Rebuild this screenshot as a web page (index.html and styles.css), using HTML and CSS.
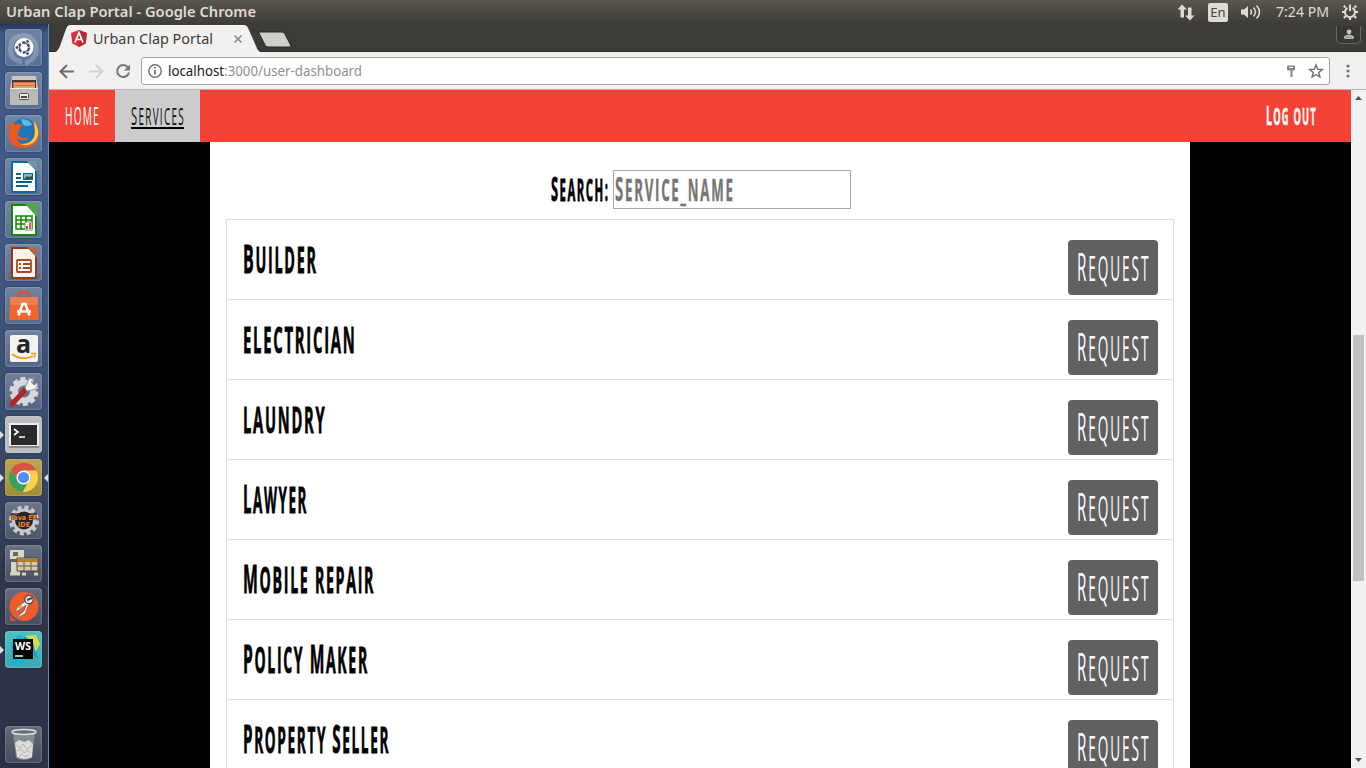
FILE: index.html
```html
<!DOCTYPE html>
<html lang="en">
<head>
<meta charset="utf-8">
<title>Urban Clap Portal</title>
<link rel="stylesheet" href="styles.css">
</head>
<body>
<div class="desktop">
  <header class="panel">
    <svg class="panel-title" width="260" height="24"><text x="6" y="17" textLength="250" lengthAdjust="spacingAndGlyphs">Urban Clap Portal - Google Chrome</text></svg>
    <div class="indicators">
      <svg width="18" height="18" viewBox="0 0 18 18" fill="#dfdbd2"><path d="M5 1.500 10 6.500H7v8H3.500v-8H.5zM13 17.500 8 12.500h3v-8h3.500v8h3z"/></svg>
      <span class="lang">En</span>
      <svg class="sound" width="22" height="18" viewBox="0 0 22 18"><path d="M1 6.500h3L8 3v12l-4-3.500H1z" fill="#dfdbd2"/><path d="M10.500 6.500q2 2.500 0 5M13.500 4.500q4 4.500 0 9M16.500 2.500q6 6.500 0 13" fill="none" stroke="#dfdbd2" stroke-width="1.500"/></svg>
      <svg class="clock" width="54" height="24"><text x="0" y="17" textLength="53" lengthAdjust="spacingAndGlyphs">7:24 PM</text></svg>
      <svg class="gear" width="18" height="18" viewBox="0 0 18 18" fill="none" stroke="#dfdbd2"><path d="M6.500 4.800a5 5 0 1 0 5 0M9 1.500V8" stroke-width="2"/><path d="M4.500 4.500 2.700 2.700M13.500 4.500l1.800-1.800M4 9H1M14 9h3M4.800 13l-2 2M13.200 13l2 2M9 14v3" stroke-width="2.200"/></svg>
    </div>
  </header>

  <div class="workspace">
    <nav class="launcher">
      <div class="tile"><svg viewBox="0 0 37 37"><path d="M8 10Q25 1 31 17 33 30 20 34M8 10Q0 30 17 33" fill="none" stroke="#c3cbe0" stroke-width="5" opacity=".35"/><circle cx="19" cy="18.500" r="9.500" fill="#fff"/><circle cx="19" cy="18.500" r="5" fill="none" stroke="#39496d" stroke-width="2.400" stroke-dasharray="9 1.500"/><g fill="#39496d" stroke="#fff"><circle cx="12" cy="18.500" r="1.900"/><circle cx="22.500" cy="12.400" r="1.900"/><circle cx="22.500" cy="24.600" r="1.900"/></g></svg></div>
      <div class="tile"><svg viewBox="0 0 37 37"><path d="M7 4h24l2 13H5z" fill="#c8c7c4"/><path d="M7 8h24v9H7z" fill="#423b37"/><path d="M8 10h22v7H8z" fill="#de7138"/><path d="M9 12h21M9 15h21" stroke="#f8c890"/><path d="M5 16h28v17H5z" fill="#b9b9b7"/><path d="M5 16.500h28" stroke="#eee"/><rect x="14.500" y="21.500" width="9" height="6" rx="1" fill="#eee" stroke="#555"/><path d="M16 25h6" stroke="#444" stroke-width="2"/></svg></div>
      <div class="tile"><svg viewBox="0 0 37 37"><circle cx="19" cy="18" r="14.500" fill="#2475b6"/><path d="M16 4q9 0 11 6-5 2-9 0" fill="#54bce5"/><path d="M4 10q3-1 3-4l3 4q4-2 8 0-4 3-4 6l-2 3q4 6 12 3-5 7-12 1 3 9 12 5 8-5 5-17l-2-5q7 6 7 14-2 13-16 13Q3 33 4 17z" fill="#e95a20"/><path d="M29 6q9 13-1 22-7 4-12 1 14 0 14-13z" fill="#ffca45"/></svg></div>
      <div class="tile"><svg viewBox="0 0 37 37"><path d="M7 4h17l7 7v23H7z" fill="#fff" stroke="#15699a" stroke-width="2"/><path d="M22 3h10v11z" fill="#6898ae"/><g stroke="#155c86" stroke-width="2"><path d="M11 16h5M11 20h5M11 24h16M11 28h12"/></g><rect x="18.500" y="15.500" width="9" height="6" fill="#79b9de" stroke="#155c86"/><path d="m19 21 3-3 2 1 3-1v3z" fill="#3e4d42"/></svg></div>
      <div class="tile"><svg viewBox="0 0 37 37"><path d="M7 4h17l7 7v23H7z" fill="#fff" stroke="#16860b" stroke-width="2"/><path d="M20 3h12v13z" fill="#4eaa3c"/><path d="M11 15h16v13H11z" fill="#eaf6e4" stroke="#16860b" stroke-width="1.500"/><path d="M11 19h16M11 23h16M16 15v13M21 15v13" stroke="#16860b" stroke-width="1.500"/><path d="M20 21h7v8h-7z" fill="#fff" stroke="#888"/><path d="M21 28v-3h2v3z" fill="#357cb2"/><path d="M24 28v-6h2v6z" fill="#e16720"/></svg></div>
      <div class="tile"><svg viewBox="0 0 37 37"><path d="M7 4h17l7 7v23H7z" fill="#f7f5f4" stroke="#923c10" stroke-width="2"/><path d="M22 3h10v11z" fill="#a96b48"/><rect x="12" y="16" width="14" height="12" rx="1" fill="#fff" stroke="#a64b1b" stroke-width="1.800"/><path d="M14 20h2M14 24h2M18 20h7M18 24h7" stroke="#a64b1b" stroke-width="2"/></svg></div>
      <div class="tile"><svg viewBox="0 0 37 37"><path d="M14 14V7q0-2 2-2h6q2 0 2 2v7" fill="none" stroke="#ca593a" stroke-width="3"/><path d="M5 10h28v8H5z" fill="#ed8052"/><path d="m5 18-1 15h30l-1-15z" fill="#ee6730"/><path d="M13.500 28.500 17.500 17h3l4 11.500M12 24.500h14" fill="none" stroke="#fff" stroke-width="2.500"/></svg></div>
      <div class="tile"><svg viewBox="0 0 37 37"><rect x="5" y="5" width="28" height="27" rx="2" fill="#f4f4f4"/><text class="glyph-a" x="11" y="23">a</text><path d="M7 24q10 7.500 21 2" fill="none" stroke="#f29b20" stroke-width="1.900"/><path d="m26 23.500 4.500 0-1.500 4.500" fill="none" stroke="#f29b20" stroke-width="1.400"/></svg></div>
      <div class="tile"><svg viewBox="0 0 37 37"><circle cx="19" cy="18.500" r="12.500" fill="none" stroke="#d5d7da" stroke-width="4" stroke-dasharray="5 2.850"/><circle cx="19" cy="18.500" r="9" fill="none" stroke="#d5d7da" stroke-width="6"/><path d="M7 31 23 14" stroke="#b32522" stroke-width="5" stroke-linecap="round"/><path d="m20 15 4-9 5-1-3 4 3 3 4-2q-1 6-6 7l-5 1z" fill="#f5f5f5" stroke="#999"/></svg></div>
      <div class="tile tile-silver running"><svg viewBox="0 0 37 37"><rect x="5" y="8" width="28" height="22" fill="#292b29" stroke="#eee" stroke-width="2"/><path d="M4 31h30" stroke="#888" stroke-width="2"/><path d="m9 13 4 3-4 3M14 21h6" fill="none" stroke="#fff" stroke-width="1.600"/></svg></div>
      <div class="tile tile-gold running focused"><svg viewBox="0 0 37 37"><circle cx="18.500" cy="18.500" r="14.500" fill="#fbd04b"/><path d="M6 11a14.500 14.500 0 0 1 25.500.500H18.500l-5.500 10z" fill="#d95243"/><path d="M6 11a14.500 14.500 0 0 0 11.500 22l7-12-12 0z" fill="#38a15a"/><circle cx="18.500" cy="18.500" r="7" fill="#fff"/><circle cx="18.500" cy="18.500" r="5.600" fill="#4e8ef5"/></svg></div>
      <div class="tile"><svg viewBox="0 0 37 37"><circle cx="19" cy="18.500" r="13" fill="none" stroke="#c6c8ca" stroke-width="4" stroke-dasharray="4 2.810"/><circle cx="19" cy="18.500" r="10.500" fill="#29252c" stroke="#c6c8ca" stroke-width="3"/><path d="M6 11h26v7H6z" fill="#29252c" opacity=".7"/><text class="glyph-jee" x="6" y="17.500" textLength="26" lengthAdjust="spacingAndGlyphs">Java EE</text><text class="glyph-jee" x="13" y="24.500" textLength="12" lengthAdjust="spacingAndGlyphs">IDE</text></svg></div>
      <div class="tile"><svg viewBox="0 0 37 37"><path d="M5 5h14v9H5zM6 17h9v11H6z" fill="#d9d8c6"/><path d="M8 7h5v4H8z" fill="#69695c"/><path d="M12 13h21v13H12z" fill="#d1c9a9" stroke="#4e4431"/><path d="M12 14h21v3H12z" fill="#b57d20"/><path d="M12 21h21M19 17v9M26 17v9" stroke="#665e4b"/><path d="M5 29h10M17 29h4M29 29h4" stroke="#d3d1bf" stroke-width="3"/></svg></div>
      <div class="tile"><svg viewBox="0 0 37 37"><circle cx="19" cy="18.500" r="14.500" fill="#ef5b2b"/><path d="m5 27 6 6H5z" fill="#e74d2e"/><path d="m21 13-8 5-3 6 6-3 5-4-2 6-9 8 10-5 4-10 1-3" fill="#eee" stroke="#666" stroke-width=".8"/><circle cx="24" cy="11.500" r="4.200" fill="#eee" stroke="#4a4a4a" stroke-width="1.200"/><path d="m22 12 5-2" stroke="#444" stroke-width="2"/><path d="m14 18 2.500 2" stroke="#efa02d" stroke-width="4"/></svg></div>
      <div class="tile tile-teal running"><svg viewBox="0 0 37 37"><path d="m6 12 8-8 14 10-9 18-11 2z" fill="#08b5db"/><path d="m20 5 11-1 4 9-8 14z" fill="#d4dd48"/><path d="m20 5-7 8 20 15-5-16z" fill="#149edd"/><path d="M8 8h20v20H8z"/><text class="glyph-ws" x="10" y="19" textLength="16" lengthAdjust="spacingAndGlyphs">WS</text><path d="M10 25h8" stroke="#fff" stroke-width="1.500"/></svg></div>
      <div class="tile tile-trash"><svg viewBox="0 0 37 37"><path d="m8 6 3 26q8 4 16 0l3-26" fill="#9da1a9" opacity=".65"/><path d="m10 17 4-3 5 2 5-2 4 4-1 13q-8 4-15 0z" fill="#deded8"/><path d="m11 19 4 3 3-4 4 5 5-4M12 25l4-2 3 4 3-3 4 3M14 31l3-3 4 3 3-2" fill="none" stroke="#b2b3b0"/><ellipse cx="19" cy="6" rx="12" ry="2.500" fill="#66707a" stroke="#ddd" stroke-width="1.500"/></svg></div>
    </nav>

    <section class="browser">
      <div class="tabstrip">
        <svg width="260" height="28" viewBox="0 0 260 28">
          <path d="M5 28C8 28 9 26 11 22L17 5Q18.500 1 21 1H195Q198 1 199.500 5L207 22Q209 28 212 28Z" fill="#f2f1f0"/>
          <path d="m30 6 8 3-1.300 10.500L30 23l-6.700-3.500L22 9z" fill="#dd3139"/><path d="m30 6 8 3-1.300 10.500L30 23z" fill="#b52d32"/>
          <path d="M26 18.500 30 8.700l4 9.800M27.600 15.500h4.800" fill="none" stroke="#fff" stroke-width="1.700"/>
          <text class="tab-title" x="44" y="20" textLength="120" lengthAdjust="spacingAndGlyphs">Urban Clap Portal</text>
          <path d="m185.500 11.500 7 7m0-7-7 7" stroke="#888" stroke-width="1.600"/>
          <path d="M211 8h22q2 0 3 2l6 12q.5 1-1 1h-22q-2 0-3-2l-6-12q-.4-1 1-1z" fill="#d0cfce" stroke="#282723"/>
        </svg>
        <div class="profile"><svg width="10" height="10" viewBox="0 0 10 10"><circle cx="5" cy="2.800" r="2.400" fill="#c6c6c4"/><path d="M.7 9.300V7.500Q5 4.500 9.300 7.500v1.800z" fill="#999" stroke="#ccc"/></svg></div>
      </div>
      <div class="toolbar">
        <svg class="history" width="86" height="36" viewBox="0 0 86 36" fill="none" stroke-width="2">
          <path d="M25 18.500H12M18 12l-6.500 6.500L18 25" stroke="#6b6b6b"/>
          <path d="M40 18.500h13M47 12l6.500 6.500L47 25" stroke="#d2d1d0"/>
          <path d="M79 14.500a6 6 0 1 0 1 5" stroke="#777"/><path d="M81 11.500v6h-6z" fill="#777"/>
        </svg>
        <div class="omnibox">
          <svg width="18" height="26" viewBox="0 0 18 26" fill="none" stroke="#707070"><circle cx="9" cy="13" r="6.200" stroke-width="1.400"/><path d="M9 12v4.500M9 9v1.600" stroke-width="1.800"/></svg>
          <svg class="url" width="200" height="26"><text x="0" y="18" textLength="194" lengthAdjust="spacingAndGlyphs"><tspan class="host">localhost</tspan>:3000/user-dashboard</text></svg>
          <svg class="omni-actions" width="43" height="26" viewBox="0 0 43 26"><path d="M1 8.500q0-1 1-1h6q1 0 1 1v3q0 1-1 1H6.500V19H4.500v-6.500H2q-1 0-1-1z" fill="#888"/><path d="M3 9.500h4" stroke="#fff"/><path d="m30 7 1.700 4.300 4.600.2-3.600 3 1.200 4.500-3.900-2.500-3.900 2.500 1.200-4.500-3.600-3 4.600-.2z" fill="none" stroke="#707070" stroke-width="1.400"/></svg>
        </div>
        <svg class="kebab" width="6" height="16" fill="#777"><circle cx="3" cy="3" r="1.600"/><circle cx="3" cy="8" r="1.600"/><circle cx="3" cy="13" r="1.600"/></svg>
      </div>

      <div class="viewport">
        <div class="page">
          <nav class="site-nav">
            <a class="nav-link"><svg class="hand light" width="36" height="52"><text y="35" transform="scale(.391 1)">HOME</text></svg></a>
            <a class="nav-link active"><svg class="hand light" width="54" height="52"><text y="35" transform="scale(.431 1)">S<tspan class="low">ervices</tspan></text><path d="M0 38h53" stroke="#000" stroke-width="2"/></svg></a>
            <a class="logout"><svg class="hand bold" width="52" height="52"><text y="35" transform="scale(.405 1)">L<tspan class="low">og out</tspan></text></svg></a>
          </nav>
          <main class="content">
            <div class="search">
              <svg class="hand bold" width="58" height="39"><text y="31" transform="scale(.378 1)">S<tspan class="low">earch:</tspan></text></svg>
              <div class="field"><svg class="hand bold" width="122" height="37"><text y="30" transform="scale(.441 1)">S<tspan class="low">ervice_name</tspan></text></svg></div>
            </div>
            <ul class="services">
              <li><svg class="hand bold" width="400" height="40"><text y="33" transform="scale(.399 1)">B<tspan class="low">uilder</tspan></text></svg><div class="request"><svg class="hand light" width="78" height="55"><text y="41" transform="scale(.4 1)">R<tspan class="low">equest</tspan></text></svg></div></li>
              <li><svg class="hand bold" width="400" height="40"><text y="33" transform="scale(.411 1)"><tspan class="low">electrician</tspan></text></svg><div class="request"><svg class="hand light" width="78" height="55"><text y="41" transform="scale(.4 1)">R<tspan class="low">equest</tspan></text></svg></div></li>
              <li><svg class="hand bold" width="400" height="40"><text y="33" transform="scale(.408 1)"><tspan class="low">laundry</tspan></text></svg><div class="request"><svg class="hand light" width="78" height="55"><text y="41" transform="scale(.4 1)">R<tspan class="low">equest</tspan></text></svg></div></li>
              <li><svg class="hand bold" width="400" height="40"><text y="33" transform="scale(.373 1)">L<tspan class="low">awyer</tspan></text></svg><div class="request"><svg class="hand light" width="78" height="55"><text y="41" transform="scale(.4 1)">R<tspan class="low">equest</tspan></text></svg></div></li>
              <li><svg class="hand bold" width="400" height="40"><text y="33" transform="scale(.394 1)">M<tspan class="low">obile repair</tspan></text></svg><div class="request"><svg class="hand light" width="78" height="55"><text y="41" transform="scale(.4 1)">R<tspan class="low">equest</tspan></text></svg></div></li>
              <li><svg class="hand bold" width="400" height="40"><text y="33" transform="scale(.39 1)">P<tspan class="low">olicy </tspan>M<tspan class="low">aker</tspan></text></svg><div class="request"><svg class="hand light" width="78" height="55"><text y="41" transform="scale(.4 1)">R<tspan class="low">equest</tspan></text></svg></div></li>
              <li><svg class="hand bold" width="400" height="40"><text y="33" transform="scale(.379 1)">P<tspan class="low">roperty </tspan>S<tspan class="low">eller</tspan></text></svg><div class="request"><svg class="hand light" width="78" height="55"><text y="41" transform="scale(.4 1)">R<tspan class="low">equest</tspan></text></svg></div></li>
            </ul>
          </main>
        </div>
        <div class="scrollbar">
          <svg width="15" height="14"><path d="M4 10h7L7.500 6z" fill="#505050"/></svg>
          <div class="track"><div class="thumb"></div></div>
          <svg width="15" height="14"><path d="M4 4h7L7.500 8z" fill="#505050"/></svg>
        </div>
      </div>
    </section>
  </div>
</div>
</body>
</html>
```
FILE: styles.css
```css
* { box-sizing: border-box; }
body { margin: 0; font-family: "Noto Sans", sans-serif; }
svg { display: block; flex: none; overflow: visible; }

.desktop { width: 1366px; height: 768px; overflow: hidden; display: flex; flex-direction: column; background: #000; }

/* top panel */
.panel { height: 24px; flex: none; display: flex; justify-content: space-between; align-items: center; background: linear-gradient(#59574e, #3d3c37); }
.panel-title text { font-size: 14px; font-weight: 600; fill: #dfdbd2; }
.indicators { display: flex; align-items: center; padding-right: 7px; }
.lang { width: 20px; height: 19px; margin-left: 13px; border-radius: 2px; background: #dfdbd2; color: #45443f; font-size: 13px; line-height: 19px; text-align: center; }
.sound { margin-left: 12px; }
.clock { margin-left: 14px; }
.clock text { font-size: 14px; fill: #dfdbd2; }
.gear { margin-left: 11px; }

.workspace { flex: 1; min-height: 0; display: flex; }

/* launcher */
.launcher { width: 49px; flex: none; display: flex; flex-direction: column; gap: 6px; padding: 5px 0 5px 5px; border-right: 1px solid #6489bd; background: linear-gradient(#26395a 0, #3f5a86 10px, #405983 30%, #3b4b6c 55%, #2f364c 75%, #2b3146); }
.tile { position: relative; width: 37px; height: 37px; flex: none; border-radius: 4px; background: linear-gradient(rgba(255,255,255,.27), rgba(255,255,255,.13)); box-shadow: inset 0 0 2px rgba(255,255,255,.55), 0 0 2px rgba(10,20,40,.55); }
.tile svg { width: 37px; height: 37px; }
.tile-silver { background: #bbbdc0; }
.tile-gold { background: linear-gradient(#bda64e, #a18c36); }
.tile-teal { background: linear-gradient(#50bec1, #3ca9ac); }
.tile-trash { margin-top: auto; }
.running::before { content: ""; position: absolute; left: -5px; top: 15px; border: 4px solid transparent; border-left: 4px solid #d9dde4; border-right: 0; }
.focused::after { content: ""; position: absolute; right: -6px; top: 15px; border: 4px solid transparent; border-right: 4px solid #d9dde4; border-left: 0; }
.glyph-a { font: bold 25px "Open Sans", sans-serif; fill: #252525; }
.glyph-jee { font: bold 7px "DejaVu Sans", sans-serif; fill: #ed8128; }
.glyph-ws { font: bold 11px "Open Sans", sans-serif; fill: #fff; }

/* browser frame */
.browser { flex: 1; min-width: 0; display: flex; flex-direction: column; }
.tabstrip { height: 28px; flex: none; display: flex; justify-content: space-between; background: #3c3b37; box-shadow: inset 0 -1px #2b2a27; }
.tab-title { font-size: 14px; fill: #3d3c38; }
.profile { width: 25px; height: 18px; margin: 2px 5px 0 0; padding: 3px 0 0 7px; border: 1px solid #696862; border-top: 0; border-radius: 0 0 5px 5px; background: #383733; }
.toolbar { height: 38px; flex: none; display: flex; align-items: center; background: #f2f1f0; border-bottom: 1px solid #b6b4b1; }
.omnibox { width: 1189px; height: 28px; margin-left: 6px; display: flex; align-items: center; padding-left: 4px; border: 1px solid #a6a6a6; border-radius: 3px; background: #fff; }
.url { margin-left: 4px; }
.url text { font-size: 14px; fill: #8f8f8f; }
.url .host { fill: #202020; }
.omni-actions { margin-left: auto; }
.kebab { margin-left: 15px; }

/* site */
.viewport { flex: 1; min-height: 0; display: flex; }
.page { flex: 1; display: flex; flex-direction: column; background: #000; }
.site-nav { height: 52px; flex: none; display: flex; background: #f44336; }
.nav-link { height: 52px; padding-left: 16px; width: 66px; }
.nav-link.active { width: 85px; background: #ccc; }
.logout { margin-left: auto; margin-right: 33px; }

/* tall, narrow hand-lettered look */
.hand { font-family: "Open Sans", sans-serif; fill: #000; letter-spacing: 5px; }
.hand.bold { font-weight: 700; stroke: #000; stroke-width: .8px; }
.hand.light { font-weight: 400; }
.hand .low { text-transform: uppercase; }
.site-nav .hand { font-size: 26px; fill: #fff; letter-spacing: 3px; }
.site-nav .hand.bold { stroke: #fff; stroke-width: .4px; }
.site-nav .low { font-size: 23px; }
.site-nav .active .hand { fill: #111; }

.content { width: 980px; flex: 1; min-height: 0; margin-left: 161px; padding: 28px 16px 0; background: #fff; overflow: hidden; }
.search { display: flex; justify-content: center; gap: 4px; padding-left: 1px; margin-bottom: 10px; }
.search .hand { font-size: 34px; letter-spacing: 4px; }
.search .low { font-size: 30px; }
.field { width: 238px; height: 39px; padding-left: 1px; border: 1px solid #a9a9a9; background: #fff; }
.field .hand.bold { fill: #757575; stroke: #757575; stroke-width: .4px; }
.services { list-style: none; margin: 0; padding: 0; border: 1px solid #ddd; }
.services li { height: 80px; display: flex; justify-content: space-between; padding: 20px 15px 0 16px; border-bottom: 1px solid #ddd; }
.services .hand { font-size: 40px; letter-spacing: 4.3px; }
.services .low { font-size: 36px; }
.request { width: 90px; height: 55px; padding-left: 9px; border-radius: 4px; background: #616161; }
.services .request .hand { font-size: 38px; fill: #fff; letter-spacing: 4.800px; }
.services .request .low { font-size: 34px; }

.scrollbar { width: 15px; flex: none; display: flex; flex-direction: column; background: #f1f1f1; }
.track { flex: 1; padding: 231px 1px 0 2px; }
.thumb { height: 246px; width: 11px; background: #c1c1c1; }
```
